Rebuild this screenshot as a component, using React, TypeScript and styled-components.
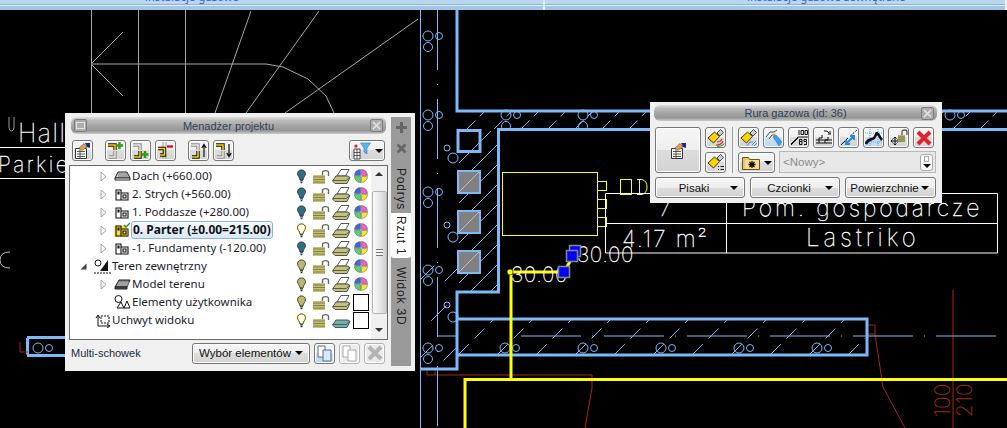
import styled, { createGlobalStyle } from "styled-components";
import type { ReactNode } from "react";

const GlobalStyle = createGlobalStyle`
    html, body {
        margin: 0;
        padding: 0;
        background: #000;
        overflow: hidden;
    }
`;

const WALL = "#7db9f6";
const RED = "#a22a0c";
const GREY = "#a8a8a8";

/* ---------- ikony ---------- */

const Stair = ({ d, on }: { d: string; on?: boolean }) => (
    <>
        <path d={d} fill="none" stroke={on ? "#111" : "#8a8a8a"} strokeWidth="3.4" />
        <path d={d} fill="none" stroke={on ? "#ffd400" : "#e8e8e8"} strokeWidth="1.5" />
    </>
);

const Plus = ({ x, y }: { x: number; y: number }) => (
    <path d={`M${x - 3.5} ${y}h7M${x} ${y - 3.5}v7`} stroke="#2f9a1c" strokeWidth="2.4" />
);

const LevelIcon = ({ kind }: { kind: "addUp" | "addDown" | "remove" | "up" | "down" }) => (
    <svg width="17" height="17" viewBox="0 0 17 17">
        {kind === "remove" ? (
            <>
                <path d="M6 0v17M9 0v4M9 12v5" stroke="#999" strokeWidth="1" fill="none" />
                <Stair d="M1 6.5H7.5V13H3" on />
                <path d="M10 4.5h6" stroke="#d8001a" strokeWidth="2.2" />
            </>
        ) : (
            <>
                <Stair d="M1 3H8V8" on={kind === "addUp" || kind === "down"} />
                <Stair d="M8 9V15H2" on={kind === "addDown" || kind === "up"} />
                {kind === "addUp" && <Plus x={12.5} y={3.5} />}
                {kind === "addDown" && <Plus x={13} y={12.5} />}
                {kind === "up" && <path d="M14 15V3M11.8 6 14 2.5 16.2 6" stroke="#111" strokeWidth="1.2" fill="none" />}
                {kind === "down" && <path d="M14 2v12M11.8 11 14 14.5 16.2 11" stroke="#111" strokeWidth="1.2" fill="none" />}
            </>
        )}
    </svg>
);

const NoteIcon = () => (
    <svg width="17" height="17" viewBox="0 0 17 17">
        <path d="M1.5 6.5h11v10h-11z" fill="#fff" stroke="#333" />
        <path d="M3 9.5h8M3 12h8M3 14.5h8M6 7v9" stroke="#444" strokeWidth=".9" />
        <path d="M5 6 10 1.5 13 5 8 8.5z" fill="#e89a52" stroke="#7a5a3a" strokeWidth=".6" />
        <path d="M11 1h5v5l-3-1z" fill="#1a2a88" />
    </svg>
);

const FilterIcon = () => (
    <svg width="20" height="18" viewBox="0 0 20 18">
        <path d="M2 7h6v10H2z" fill="#fff" stroke="#333" strokeWidth=".9" />
        <path d="M5 7v10M2 10.5h6M2 13.5h6" stroke="#333" strokeWidth=".8" />
        <circle cx="4" cy="4" r="1.6" fill="#e02020" />
        <path d="M8.500 1h10l-3.500 5v6l-3-2V6z" fill="#5ab4f0" stroke="#2d80c8" strokeWidth=".6" />
    </svg>
);

const Caret = styled.span`
    display: inline-block;
    width: 0;
    height: 0;
    border-left: 4px solid transparent;
    border-right: 4px solid transparent;
    border-top: 4px solid #000;
    flex: none;
`;

const BULB = { blue: "#2b6f86", olive: "#b9b96e", pale: "#fffbe0" };

const Bulb = ({ tone }: { tone: keyof typeof BULB }) => (
    <svg width="11" height="15" viewBox="0 0 12 17">
        {tone === "pale" && <circle cx="6" cy="6" r="6" fill="#ffff90" />}
        <path
            d="M6 1C3 1 1.5 3 1.5 5.5 1.5 8 4 9 4.3 12.5h3.4C8 9 10.500 8 10.500 5.500 10.500 3 9 1 6 1z"
            fill={BULB[tone]}
            stroke="#222"
            strokeWidth=".9"
        />
        <path d="M4.500 13.500h3M5 15.500h2" stroke={tone === "blue" ? "#1030c0" : "#222"} strokeWidth="1.400" />
    </svg>
);

const Lock = () => (
    <svg width="17" height="15" viewBox="0 0 17 15">
        <path d="M9.500 7V3.500C9.500 1 15.500 1 15.500 3.500V7" fill="none" stroke="#666" strokeWidth="1.400" />
        <path d="M0 6h12v9H0z" fill="#c4c27a" />
        <path d="M0 8h12M0 10.500h12M0 13h12" stroke="#6e6d34" strokeWidth=".8" />
    </svg>
);

const Printer = ({ tone = "#c4c27a" }: { tone?: string }) => (
    <svg width="19" height="15" viewBox="0 0 19 15">
        {tone === "#c4c27a" && <path d="M5 7 9 .5h8L13.500 7z" fill="#fff" stroke="#444" strokeWidth=".9" />}
        <path d="M4 7h12l2 1.500-3 6H3l-2.500-2.500z" fill={tone} stroke="#444" strokeWidth=".9" />
        <path d="M1 11.500h13.500l3-3.500" fill="none" stroke="#444" strokeWidth=".8" />
    </svg>
);

const Palette = () => (
    <svg width="14" height="14" viewBox="0 0 14 14">
        <path d="M6.500 6.500V.5A6 6 0 0 0 .5 6.500z" fill="#3f62ea" stroke="#333" strokeWidth=".4" />
        <path d="M7.500 6.500V.5A6 6 0 0 1 13.500 6.500z" fill="#f45cc8" stroke="#333" strokeWidth=".4" />
        <path d="M6.500 7.500H.5A6 6 0 0 0 6.500 13.500z" fill="#4ed86c" stroke="#333" strokeWidth=".4" />
        <path d="M7.500 7.500h6A6 6 0 0 1 7.500 13.500z" fill="#f8e62a" stroke="#333" strokeWidth=".4" />
    </svg>
);

const RoofIcon = () => (
    <svg width="17" height="12" viewBox="0 0 17 12">
        <path d="M1 8 4 2h9l3 6z" fill="#ccc" stroke="#222" />
        <path d="M5 3v4M7 3v4M9 3v4M11 3v4M13 3v4" stroke="#666" strokeWidth=".8" />
        <path d="M1 8h15v2H1z" fill="#fff" stroke="#222" />
    </svg>
);

const FloorIcon = ({ active }: { active?: boolean }) => (
    <svg width="17" height="16" viewBox="0 0 17 16">
        {active && <path d="M.5 3.500h12.500v11.500H.5z" fill="#ffd83a" />}
        <path d="M2 4h5v10H2zM7 7h7v7H7zM4 6h1v2H4zM9 9h3v3H9z" fill="none" stroke="#111" strokeWidth="1.100" />
        {active && <path d="M10 3l2 2 4-4" fill="none" stroke="#2f8a2a" strokeWidth="1.300" />}
    </svg>
);

const TerrainIcon = () => (
    <svg width="17" height="17" viewBox="0 0 17 17">
        <circle cx="4" cy="5" r="3" fill="#fff" stroke="#111" />
        <path d="M6 13 14 2v11z" fill="#111" />
        <path d="M0 15h17" stroke="#111" strokeDasharray="2 1" />
    </svg>
);

const ModelIcon = () => (
    <svg width="17" height="12" viewBox="0 0 17 12">
        <path d="M1 9 5 2h11l-3 7z" fill="#888" stroke="#222" />
        <path d="M3 7h11M4 5h11" stroke="#ccc" strokeWidth=".8" />
        <path d="M1 9h12v2H1z" fill="#555" stroke="#222" />
    </svg>
);

const ElementsIcon = () => (
    <svg width="17" height="14" viewBox="0 0 17 14">
        <circle cx="4.500" cy="4" r="3.500" fill="#fff" stroke="#111" />
        <path d="M3 13l7-0 -3-6zM10 13h6l-3-7-3 7z" fill="#fff" stroke="#111" />
    </svg>
);

const HandleIcon = () => (
    <svg width="17" height="15" viewBox="0 0 17 15">
        <path d="M4 13V3M2 5l2-3 2 3M4 13h12M13 11l3 2-3 2" fill="none" stroke="#111" />
        <path d="M7 3h8v7H7z" fill="none" stroke="#111" strokeDasharray="2 1" />
    </svg>
);

const Brush = ({ badge }: { badge: "hatch" | "colors" | "list" | "pipe" }) => (
    <svg width="18" height="18" viewBox="0 0 18 18">
        <path d="M10 4 13.500 .5l3 3L13 7z" fill="#ccd" stroke="#222" strokeWidth=".8" />
        <path d="M1 9 7.500 3l5 4.500L6.500 14z" fill="#ffd400" stroke="#222" strokeWidth=".9" />
        {badge === "colors" && <path d="M9 16c3 0 6-1 7-4M10 13c2 0 4-1 5-3" fill="none" stroke="#e03030" strokeWidth="1.200" />}
        {badge === "colors" && <path d="M10 17.500c3 0 6-1 7.500-3" fill="none" stroke="#30a040" strokeWidth="1.200" />}
        {badge === "list" && <path d="M11 12h1v1h-1zM13.500 12H17v1h-3.500zM11 15h1v1h-1zM13.500 15H17v1h-3.500z" fill="#222" />}
        {badge === "pipe" && <path d="M7 17l3-4h3M12 16l4-4M14 17l3-3" fill="none" stroke="#3a90e0" strokeWidth="1" />}
    </svg>
);

const PipeBrush = () => (
    <svg width="18" height="18" viewBox="0 0 18 18">
        <path d="M1 8l4-5h4l3-2M4 10l3-4h3" fill="none" stroke="#333" strokeWidth=".9" />
        <path d="M7 6l2-2 2 2-2 2z" fill="#f0a020" />
        <path d="M8 8l3-2 6 7-3 4z" fill="#3aa0f0" stroke="#1d70b8" strokeWidth=".5" />
    </svg>
);

const ScaleIcon = () => (
    <svg width="18" height="17" viewBox="0 0 18 17">
        <path d="M1 15 8 8h10" fill="none" stroke="#111" />
        <path d="M1 16 8 9" fill="none" stroke="#111" />
        <path
            d="M9 1v5M11 1.500h2.500v4H11zM15 1.500h2.500v4H15zM9.500 10.500h2.500v2H9.500zM9.500 12.500h2.500v3H9.500zM14 10.500h2.500v2H14zM16.500 12.500v3H14"
            fill="none"
            stroke="#111"
        />
    </svg>
);

const StepIcon = () => (
    <svg width="18" height="17" viewBox="0 0 18 17">
        <path d="M1 11h16M1 14h16M4 14V9h3V6M10 14v-3h3V8" fill="none" stroke="#111" />
        <path d="M9 2h3l2 2M15 2v3M13 5h3" fill="none" stroke="#111" />
    </svg>
);

const LineArrowIcon = () => (
    <svg width="18" height="17" viewBox="0 0 18 17">
        <path d="M1 16 8 9" stroke="#111" />
        <path d="M10 7l7-6" stroke="#111" strokeDasharray="2 1.500" />
        <path d="M6 15 14 7M6 11v4h4M14 11V7h-4" fill="none" stroke="#1f8ae0" strokeWidth="1.800" />
    </svg>
);

const RouteIcon = () => (
    <svg width="18" height="18" viewBox="0 0 18 18">
        <path d="M0 4h18M0 13h18M5 0v18M13 0v18" stroke="#5aa0f0" strokeDasharray="1 1" />
        <path d="M1 15c2-6 6-4 8-6s2-5 3-5 3 5 5 7" fill="none" stroke="#111" strokeWidth="2.600" />
    </svg>
);

const MoveLockIcon = () => (
    <svg width="18" height="18" viewBox="0 0 18 18">
        <path d="M1 12h8M5 8v8M1 12l1.500-1.500M1 12l1.500 1.500M9 12l-1.500-1.500M9 12l-1.500 1.500M5 8 3.500 9.500M5 8l1.500 1.500M5 16l-1.500-1.500M5 16l1.500-1.500" stroke="#111" fill="none" />
        <path d="M8 6h7v7H8z" fill="#b7b56a" />
        <path d="M8 8h7M8 10h7M8 12h7" stroke="#5b5a2a" strokeWidth=".7" />
        <path d="M12 6V2.500c0-2 5-2 5 0V6" fill="none" stroke="#555" strokeWidth="1.300" />
    </svg>
);

const DeleteIcon = ({ off }: { off?: boolean }) => (
    <svg width="18" height="18" viewBox="0 0 18 18">
        <path d="M3 3 15 15M15 3 3 15" stroke={off ? "#b4b4b4" : "#e0242c"} strokeWidth="4" />
    </svg>
);

const FolderIcon = () => (
    <svg width="18" height="15" viewBox="0 0 18 15">
        <path d="M.5 2.500h6l1 2h10v10H.5z" fill="#e8c468" stroke="#6a5520" />
        <path d="M3 5h14v9H3z" fill="#f4dc90" />
        <path d="M10 6v7M6.500 9.500h7M7.500 7l5 5M12.500 7l-5 5" stroke="#111" strokeWidth="1.300" />
    </svg>
);

const CopyIcon = ({ off }: { off?: boolean }) => (
    <svg width="17" height="17" viewBox="0 0 17 17">
        <path d="M2 1h7v11H2z" fill="#fff" stroke={off ? "#aaa" : "#5a6a88"} />
        <path d="M7 5h8v11H7z" fill={off ? "#fff" : "#d8e8fa"} stroke={off ? "#aaa" : "#5a6a88"} />
    </svg>
);

const ShowIcon = () => (
    <svg width="11" height="11" viewBox="0 0 11 11">
        <path d="M0 4h4V0h3v4h4v3H7v4H4V7H0z" fill="#666" />
    </svg>
);

const HideIcon = () => (
    <svg width="11" height="11" viewBox="0 0 11 11">
        <path d="M1.500 1.500 9.500 9.500M9.500 1.500 1.500 9.500" stroke="#666" strokeWidth="2.600" />
    </svg>
);

const CloseGlyph = () => (
    <svg width="9" height="9" viewBox="0 0 9 9">
        <path d="M1 1 8 8M8 1 1 8" stroke="#e4e4e4" strokeWidth="1.600" />
    </svg>
);

const TreeArrow = ({ kind }: { kind?: "open" | "closed" }) => (
    <ArrowSlot>
        {kind === "closed" && (
            <svg width="7" height="11" viewBox="0 0 7 11">
                <path d="M1 1 6 5.500 1 10z" fill="#fff" stroke="#a4a4a4" />
            </svg>
        )}
        {kind === "open" && (
            <svg width="7" height="7" viewBox="0 0 7 7">
                <path d="M6.500 .5V6.500H.5z" fill="#444" />
            </svg>
        )}
    </ArrowSlot>
);

/* ---------- rysunek CAD ---------- */

const range = (from: number, to: number, step: number) => {
    const out: number[] = [];
    for (let v = from; v <= to; v += step) out.push(v);
    return out;
};

const CadText = styled.text`
    font-family: "Inter", "Liberation Sans", sans-serif;
    font-weight: 100;
    fill: #fff;
    stroke: #fff;
    stroke-width: 0.35;
`;

const hatch = (clip: string, x0: number, x1: number, step: number, y0: number, y1: number, dash?: string) => (
    <g clipPath={`url(#${clip})`} stroke={WALL} strokeWidth="1" fill="none">
        {range(x0, x1, step).map((x) => (
            <line key={x} x1={x} y1={y1} x2={x + (y1 - y0)} y2={y0} strokeDasharray={dash} />
        ))}
    </g>
);

const Rings = ({ x, y, third = true }: { x: number; y: number; third?: boolean }) => (
    <g fill="none" stroke={WALL}>
        <circle cx={x} cy={y} r="5" />
        <circle cx={x + 11} cy={y} r="3.500" />
        {third && <circle cx={x} cy={y + 11} r="4.500" />}
    </g>
);

const Drawing = () => (
    <Canvas viewBox="0 10 1007 418">
        <defs>
            <clipPath id="topWall"><rect x="459" y="111" width="548" height="18" /></clipPath>
            <clipPath id="column"><rect x="459" y="131" width="38" height="160" /></clipPath>
            <clipPath id="leftBand"><rect x="421" y="10" width="36" height="358" /></clipPath>
            <clipPath id="bottomWall"><rect x="459" y="320" width="406" height="34" /></clipPath>
        </defs>

        {/* szare linie dachu */}
        <g fill="none" stroke={GREY} strokeWidth="1">
            <path d="M91.500 10V113M138.500 10V113M185.500 10V113" />
            <path d="M91 64H266L283 67 308 79 326 96 334 113" />
            <path d="M123 32 91 64 123 96" />
            <path d="M251 11 215 113M319 11 246 113M418 19 285 113" />
        </g>

        {/* lewa strona */}
        <g fill="none" stroke="#fff" strokeWidth="1">
            <path d="M0 147.500H65M0 178.500H65" />
            <path d="M9 117V127Q9 131 11.500 131T14 127V117" stroke="#999" />
        </g>
        <CadText x="18" y="142" fontSize="25" letterSpacing="1.500">Hall</CadText>
        <CadText x="-2" y="172" fontSize="21" letterSpacing="2.500">Parkie</CadText>
        <path d="M10 252Q0 252 0 260T10 268" fill="none" stroke="#bbb" />

        <g fill="none" stroke={WALL}>
            <path d="M27.500 338V354.500M27 337.500H66M27 355.500H66" strokeWidth="3" />
        </g>
        <Rings x={38} y={348} third={false} />
        <path d="M20 342V352H28" fill="none" stroke={RED} />

        {/* czerwone linie */}
        <g fill="none" stroke={RED} strokeWidth="1">
            <path d="M427 368V375H592V388L585 428" />
            <path d="M435 368V375" />
            <path d="M867 325H875V334H867M875 334 883 387 905 428" />
            <path d="M953 290V428" />
        </g>
        <g fill={RED} fontFamily="'Inter', 'Liberation Sans', sans-serif" fontWeight="200" fontSize="21">
            <text transform="translate(950 417) rotate(-90)">100</text>
            <text transform="translate(972 417) rotate(-90)">210</text>
        </g>

        {/* cienkie linie osiowe */}
        <g fill="none" stroke={WALL} strokeWidth="1">
            <path d="M420.500 10V428" />
            <path d="M437.500 10V428" strokeDasharray="60 14 1 14" />
            <path d="M438 336H457M521 336H1007" strokeDasharray="60 11 1 11" />
        </g>

        {hatch("leftBand", 300, 470, 26, 10, 400, "22 34")}
        {hatch("topWall", 440, 1000, 27, 111, 129, "12 6")}
        {hatch("column", 330, 500, 20, 130, 292)}
        {hatch("bottomWall", 420, 870, 39, 320, 354, "14 8")}

        {[36, 115, 192, 270, 348].map((y) => (
            <Rings key={y} x={428} y={y} />
        ))}
        <g fill="none" stroke={WALL}>
            <circle cx="447" cy="148" r="3" />
            <circle cx="453" cy="158" r="5" />
            <circle cx="447" cy="225" r="3" />
            <circle cx="453" cy="237" r="5" />
            <circle cx="447" cy="305" r="3" />
            <circle cx="453" cy="317" r="5" />
        </g>
        {[506, 583].map((x) => (
            <Rings key={x} x={x} y={115} />
        ))}
        <Rings x={950} y={115} third={false} />
        {[505, 583, 661, 739, 817].map((x) => (
            <Rings key={x} x={x} y={348} third={false} />
        ))}

        {/* grube sciany */}
        <g fill="none" stroke={WALL} strokeWidth="3">
            <path d="M457 10V111H1007" />
            <path d="M1007 129.500H498.500V292H457V369H420" />
            <path d="M457 319H867V355H457" />
            <rect x="458" y="130.500" width="22" height="21" />
        </g>
        {[171, 211, 251].map((y) => (
            <g key={y}>
                <rect x="458" y={y} width="22" height="22" fill="#808080" stroke={WALL} strokeWidth="2" />
                <path d={`M459 ${y + 21}L479 ${y + 1}`} stroke="#c0c0c0" />
            </g>
        ))}

        {/* urzadzenie */}
        <g fill="none" stroke="#ffff00" strokeWidth="1">
            <rect x="502.500" y="172.500" width="95" height="63" />
            <rect x="597.500" y="181.500" width="9" height="9" />
            <rect x="597.500" y="199.500" width="9" height="9" />
            <rect x="597.500" y="217.500" width="9" height="9" />
            <rect x="620.500" y="179.500" width="11" height="15" />
            <path d="M637 179.500H642Q647 181 647 187T642 194.500H637M639.500 180V194" />
        </g>

        {/* tabela */}
        <g fill="none" stroke="#fff" strokeWidth="1">
            <path d="M605.500 253V193.500H997.500V253H605.500M605.500 223.500H997.500M726.500 193.500V253" />
        </g>
        <CadText x="659" y="216" fontSize="24">7</CadText>
        <CadText x="742" y="216" fontSize="23" letterSpacing="2.900">Pom. gospodarcze</CadText>
        <CadText x="622" y="247" fontSize="23" letterSpacing="1.800">4.17 m²</CadText>
        <CadText x="806" y="246" fontSize="24" letterSpacing="4">Lastriko</CadText>

        {/* rura */}
        <g fill="none" stroke="#ffff00" strokeWidth="3">
            <path d="M511 379V272H564L572 258" />
            <path d="M465 428V379.500H1007" />
        </g>
        <circle cx="510" cy="272" r="3" fill="#ffff00" stroke="#000" strokeWidth=".6" />
        <CadText x="577" y="262" fontSize="21" letterSpacing=".6">30.00</CadText>
        <CadText x="511" y="282" fontSize="21" letterSpacing=".6">30.00</CadText>
        <Handle x="569.500" y="245.500" width="11" height="11" />
        <Handle x="566.500" y="250.500" width="11" height="11" />
        <Handle x="558.500" y="266.500" width="11" height="11" />
    </Canvas>
);

/* ---------- menedzer projektu ---------- */

type Row = {
    label: string;
    indent: number;
    caret?: "open" | "closed";
    icon: ReactNode;
    bulb: keyof typeof BULB;
    printTone?: string;
    palette?: boolean;
    active?: boolean;
};

const rows: Row[] = [
    { label: "Dach (+660.00)", indent: 30, caret: "closed", icon: <RoofIcon />, bulb: "blue", palette: true },
    { label: "2. Strych (+560.00)", indent: 30, caret: "closed", icon: <FloorIcon />, bulb: "blue", palette: true },
    { label: "1. Poddasze (+280.00)", indent: 30, caret: "closed", icon: <FloorIcon />, bulb: "blue", palette: true },
    { label: "0. Parter (±0.00=215.00)", indent: 30, caret: "closed", icon: <FloorIcon active />, bulb: "pale", palette: true, active: true },
    { label: "-1. Fundamenty (-120.00)", indent: 30, caret: "closed", icon: <FloorIcon />, bulb: "blue", palette: true },
    { label: "Teren zewnętrzny", indent: 10, caret: "open", icon: <TerrainIcon />, bulb: "olive", palette: true },
    { label: "Model terenu", indent: 30, caret: "closed", icon: <ModelIcon />, bulb: "olive", palette: true },
    { label: "Elementy użytkownika", indent: 30, icon: <ElementsIcon />, bulb: "olive" },
    { label: "Uchwyt widoku", indent: 10, icon: <HandleIcon />, bulb: "pale", printTone: "#6fb0b0" },
];

const ManagerWindow = () => (
    <ManagerFrame>
        <ManagerMain>
            <TitleBar>
                <TitleButton><TitleDash /></TitleButton>
                <TitleText>Menadżer projektu</TitleText>
                <TitleButton><CloseGlyph /></TitleButton>
            </TitleBar>

            <ManagerToolbar>
                <IconButton><NoteIcon /></IconButton>
                <ToolGroup>
                    <IconButton><LevelIcon kind="addUp" /></IconButton>
                    <IconButton><LevelIcon kind="addDown" /></IconButton>
                    <IconButton><LevelIcon kind="remove" /></IconButton>
                </ToolGroup>
                <ToolGroup>
                    <IconButton><LevelIcon kind="up" /></IconButton>
                    <IconButton><LevelIcon kind="down" /></IconButton>
                </ToolGroup>
                <FilterButton><FilterIcon /><Caret /></FilterButton>
            </ManagerToolbar>

            <TreePanel>
                <TreeList>
                    {rows.map((row) => (
                        <TreeRow key={row.label} $indent={row.indent}>
                            <TreeArrow kind={row.caret} />
                            <RowIcon>{row.icon}</RowIcon>
                            <RowLabel $active={row.active}>{row.label}</RowLabel>
                            <StatusCell $first><Bulb tone={row.bulb} /></StatusCell>
                            <StatusCell><Lock /></StatusCell>
                            <StatusCell><Printer tone={row.printTone} /></StatusCell>
                            <StatusCell>{row.palette ? <Palette /> : <EmptySwatch />}</StatusCell>
                        </TreeRow>
                    ))}
                </TreeList>
                <ScrollBar>
                    <ScrollArrow $up />
                    <ScrollThumb><ThumbGrip /></ScrollThumb>
                    <ScrollArrow />
                </ScrollBar>
            </TreePanel>

            <ManagerFooter>
                <FooterLabel>Multi-schowek</FooterLabel>
                <DropButton $width={118}><DropLabel>Wybór elementów</DropLabel><Caret /></DropButton>
                <IconButton $blue><CopyIcon /></IconButton>
                <IconButton $off><CopyIcon off /></IconButton>
                <IconButton $off><DeleteIcon off /></IconButton>
            </ManagerFooter>
        </ManagerMain>

        <TabColumn>
            <TabGlyph><ShowIcon /></TabGlyph>
            <TabGlyph><HideIcon /></TabGlyph>
            <SideTab $height={54}>Podrys</SideTab>
            <SideTab $height={45} $active>Rzut 1</SideTab>
            <SideTab $height={108}>Widok 3D</SideTab>
        </TabColumn>
    </ManagerFrame>
);

/* ---------- rura gazowa ---------- */

const PipeWindow = () => (
    <PipeFrame>
        <TitleBar $slim>
            <TitleSpacer />
            <TitleText>Rura gazowa (id: 36)</TitleText>
            <TitleButton><CloseGlyph /></TitleButton>
        </TitleBar>

        <PipeBody>
            <BigButton><NoteIcon /></BigButton>
            <BrushColumn>
                <IconButton><Brush badge="colors" /></IconButton>
                <IconButton><Brush badge="list" /></IconButton>
            </BrushColumn>
            <Divider />
            <PipeTools>
                <PipeToolRow>
                    <IconButton><Brush badge="pipe" /></IconButton>
                    <IconButton $blue><PipeBrush /></IconButton>
                    <IconButton><ScaleIcon /></IconButton>
                    <IconButton><StepIcon /></IconButton>
                    <IconButton><LineArrowIcon /></IconButton>
                    <IconButton $blue><RouteIcon /></IconButton>
                    <IconButton><MoveLockIcon /></IconButton>
                    <IconButton><DeleteIcon /></IconButton>
                </PipeToolRow>
                <LayerRow>
                    <FolderButton><FolderIcon /><Caret /></FolderButton>
                    <NameField>
                        <NamePlaceholder>&lt;Nowy&gt;</NamePlaceholder>
                        <NameSpin><SpinTop /><Caret /></NameSpin>
                    </NameField>
                </LayerRow>
            </PipeTools>
        </PipeBody>

        <PipeFooter>
            <DropButton $width={90}><DropLabel>Pisaki</DropLabel><Caret /></DropButton>
            <DropButton $width={90}><DropLabel>Czcionki</DropLabel><Caret /></DropButton>
            <DropButton $width={91}><DropLabel>Powierzchnie</DropLabel><Caret /></DropButton>
        </PipeFooter>
    </PipeFrame>
);

const App = () => (
    <Page>
        <GlobalStyle />
        <TopBar>
            <TopTab $pad={145}><span>instalacje gazowe</span></TopTab>
            <TopTab $pad={202} $grow><span>instalacje gazowe zewnętrzne</span></TopTab>
        </TopBar>
        <Drawing />
        <ManagerWindow />
        <PipeWindow />
    </Page>
);

export default App;

const UI_FONT = `"Noto Sans", "DejaVu Sans", sans-serif`;
const LABEL_FONT = `"Liberation Sans", Arial, sans-serif`;

const Page = styled.div`
    position: relative;
    width: 1007px;
    height: 428px;
    overflow: hidden;
    background: #000;
    display: flex;
    flex-direction: column;
    font-family: ${UI_FONT};
`;

const TopBar = styled.div`
    height: 10px;
    flex: none;
    display: flex;
    background: linear-gradient(#bcd6f2 0, #bcd6f2 4px, #8fb2d8 4px, #8fb2d8 5px, #d6f4fa 5px, #d6f4fa 6px, #a4c6e6 6px, #a4c6e6 10px);
`;

const TopTab = styled.div<{ $pad: number; $grow?: boolean }>`
    width: ${({ $grow }) => ($grow ? "auto" : "545px")};
    flex: ${({ $grow }) => ($grow ? 1 : "none")};
    box-sizing: border-box;
    padding-left: ${({ $pad }) => $pad}px;
    overflow: hidden;
    border-right: 2px solid #e8f2fb;
    font-size: 11px;
    line-height: 0;
    color: #3e62c0;
    letter-spacing: 0.2px;
    white-space: nowrap;

    span {
        display: block;
        margin-top: -3px;
    }
`;

const Canvas = styled.svg`
    flex: 1;
    display: block;
    width: 1007px;
    height: 418px;
`;

const Handle = styled.rect`
    fill: #0000ff;
    stroke: #888;
    stroke-width: 1.5;
`;

const Floating = styled.div`
    position: absolute;
    box-sizing: border-box;
    background: #f0f0f0;
    color: #111;
`;

const ManagerFrame = styled(Floating)`
    left: 65px;
    top: 113px;
    width: 350px;
    height: 258px;
    display: flex;
    padding: 4px 4px 5px 4px;
    gap: 3px;
`;

const ManagerMain = styled.div`
    width: 319px;
    display: flex;
    flex-direction: column;
`;

const TitleBar = styled.div<{ $slim?: boolean }>`
    height: ${({ $slim }) => ($slim ? 16 : 17)}px;
    flex: none;
    margin: 0 ${({ $slim }) => ($slim ? 0 : 2)}px;
    padding: 0 3px;
    display: flex;
    align-items: center;
    justify-content: space-between;
    border-radius: 6px;
    background: linear-gradient(#e0e0e0 0, #bcbcbc 20%, #a6a6a6 50%, #969696 80%, #cccccc 100%);
`;

const TitleText = styled.div`
    font-family: ${LABEL_FONT};
    font-size: 11px;
    color: #33425a;
    line-height: 16px;
`;

const TitleButton = styled.div`
    width: 11px;
    height: 11px;
    border: 1px solid #7c7c7c;
    border-radius: 2px;
    background: #adadad;
    display: flex;
    align-items: center;
    justify-content: center;
`;

const TitleSpacer = styled.div`
    width: 13px;
`;

const TitleDash = styled.div`
    width: 7px;
    height: 5px;
    border: 1px solid #e4e4e4;
`;

const ManagerToolbar = styled.div`
    height: 31px;
    flex: none;
    padding: 6px 3px 0 3px;
    box-sizing: border-box;
    display: flex;
    align-items: flex-start;
    gap: 12px;
`;

const ToolGroup = styled.div`
    display: flex;
    gap: 4px;
`;

const IconButton = styled.div<{ $blue?: boolean; $off?: boolean }>`
    width: 21px;
    height: 21px;
    flex: none;
    box-sizing: border-box;
    display: flex;
    align-items: center;
    justify-content: center;
    border: 1px solid ${({ $off }) => ($off ? "#b4b4b4" : "#777")};
    border-radius: 3px;
    box-shadow: inset 0 0 0 1px #fff;
    background: ${({ $blue, $off }) =>
        $blue
            ? "linear-gradient(#eef5fd 0, #eef5fd 50%, #cfe2f6 50%, #bcd6f0 100%)"
            : $off
              ? "#ececec"
              : "linear-gradient(#f6f6f6 0, #eeeeee 50%, #dcdcdc 50%, #d4d4d4 100%)"};
`;

const FilterButton = styled(IconButton)`
    width: 36px;
    margin-left: auto;
    gap: 3px;
`;

const TreePanel = styled.div`
    height: 175px;
    flex: none;
    display: flex;
    box-sizing: border-box;
    border: 1px solid #6a6a6a;
    background: #fff;
`;

const TreeList = styled.div`
    flex: 1;
    min-width: 0;
    display: flex;
    flex-direction: column;
    padding-top: 1px;
`;

const TreeRow = styled.div<{ $indent: number }>`
    height: 18px;
    flex: none;
    display: flex;
    align-items: center;
    padding-left: ${({ $indent }) => $indent}px;
`;

const ArrowSlot = styled.span`
    width: 14px;
    flex: none;
    display: flex;
    align-items: center;
`;

const RowIcon = styled.span`
    width: 18px;
    flex: none;
    display: flex;
    align-items: center;
`;

const RowLabel = styled.span<{ $active?: boolean }>`
    font-size: ${({ $active }) => ($active ? 12 : 11.5)}px;
    line-height: 16px;
    color: #1c1c30;
    white-space: nowrap;
    margin-left: ${({ $active }) => ($active ? "-1px" : 0)};
    padding: 0 ${({ $active }) => ($active ? "1px" : 0)};
    font-weight: ${({ $active }) => ($active ? 700 : 400)};
    ${({ $active }) =>
        $active
            ? `
        border: 1px solid #8db4dc;
        border-radius: 3px;
        background: linear-gradient(#f4f9fe, #d8e8f8);
        color: #111;
    `
            : ""}
`;

const StatusCell = styled.span<{ $first?: boolean }>`
    width: 20px;
    flex: none;
    display: flex;
    align-items: center;
    justify-content: center;
    ${({ $first }) => ($first ? "margin-left: auto;" : "")}
`;

const EmptySwatch = styled.span`
    width: 14px;
    height: 15px;
    border: 1px solid #000;
    background: #fff;
`;

const ScrollBar = styled.div`
    width: 16px;
    flex: none;
    display: flex;
    flex-direction: column;
    align-items: center;
    justify-content: space-between;
    padding: 6px 0 7px 0;
    box-sizing: border-box;
    background: #f0f0f0;
`;

const ScrollArrow = styled.span<{ $up?: boolean }>`
    width: 0;
    height: 0;
    border-left: 4px solid transparent;
    border-right: 4px solid transparent;
    ${({ $up }) => ($up ? "border-bottom: 4px solid #333;" : "border-top: 4px solid #333;")}
`;

const ScrollThumb = styled.div`
    width: 15px;
    height: 123px;
    box-sizing: border-box;
    border: 1px solid #b4b4b4;
    border-radius: 2px;
    background: linear-gradient(90deg, #fafafa, #e4e4e4 60%, #d0d0d0);
    display: flex;
    align-items: center;
    justify-content: center;
`;

const ThumbGrip = styled.div`
    width: 7px;
    height: 7px;
    background: repeating-linear-gradient(#777 0, #777 1px, #f4f4f4 1px, #f4f4f4 3px);
`;

const ManagerFooter = styled.div`
    flex: 1;
    display: flex;
    align-items: center;
    padding: 0 3px 0 2px;
    gap: 4px;
`;

const FooterLabel = styled.span`
    font-family: ${LABEL_FONT};
    font-size: 11px;
    color: #1c2a44;
    margin-right: auto;
`;

const DropButton = styled.div<{ $width: number }>`
    width: ${({ $width }) => $width}px;
    height: 21px;
    flex: none;
    box-sizing: border-box;
    padding: 0 6px 0 2px;
    display: flex;
    align-items: center;
    font-family: ${LABEL_FONT};
    font-size: 11.5px;
    color: #111;
    border: 1px solid #777;
    border-radius: 3px;
    box-shadow: inset 0 0 0 1px #fff;
    background: linear-gradient(#f6f6f6 0, #eeeeee 50%, #dcdcdc 50%, #d4d4d4 100%);
`;

const DropLabel = styled.span`
    flex: 1;
    min-width: 0;
    text-align: center;
    white-space: nowrap;
`;

const TabColumn = styled.div`
    width: 20px;
    flex: none;
    display: flex;
    flex-direction: column;
    background: #9a9a9a;
`;

const TabGlyph = styled.div`
    height: 21px;
    flex: none;
    display: flex;
    align-items: center;
    justify-content: center;
`;

const SideTab = styled.div<{ $height: number; $active?: boolean }>`
    height: ${({ $height }) => $height}px;
    flex: none;
    box-sizing: border-box;
    writing-mode: vertical-rl;
    padding-top: ${({ $active }) => ($active ? 3 : 9)}px;
    display: flex;
    align-items: center;
    font-family: ${LABEL_FONT};
    font-size: 12px;
    color: #222;
    background: ${({ $active }) => ($active ? "#fff" : "#9a9a9a")};
    border-radius: 0 0 ${({ $active }) => ($active ? "3px 3px" : "0 0")};
    letter-spacing: 0.8px;
`;

const PipeFrame = styled(Floating)`
    left: 650px;
    top: 102px;
    width: 292px;
    height: 101px;
    padding: 3px 5px 0 4px;
    display: flex;
    flex-direction: column;
`;

const PipeBody = styled.div`
    display: flex;
    margin-top: 6px;
    padding-left: 1px;
`;

const BigButton = styled(IconButton)`
    width: 46px;
    height: 46px;
    margin-right: 4px;
`;

const BrushColumn = styled.div`
    display: flex;
    flex-direction: column;
    gap: 4px;
`;

const Divider = styled.div`
    width: 1px;
    height: 46px;
    margin: 0 5px 0 6px;
    background: #a0a0a0;
`;

const PipeTools = styled.div`
    flex: 1;
    min-width: 0;
    display: flex;
    flex-direction: column;
    gap: 4px;
`;

const PipeToolRow = styled.div`
    display: flex;
    gap: 4px;
`;

const LayerRow = styled.div`
    display: flex;
    gap: 4px;
`;

const FolderButton = styled(IconButton)`
    width: 37px;
    gap: 4px;
`;

const NameField = styled.div`
    width: 157px;
    height: 22px;
    margin-top: -1px;
    box-sizing: border-box;
    border: 1px solid #b8b8b8;
    background: #e8e8e8;
    display: flex;
    align-items: center;
    justify-content: space-between;
    padding: 0 2px 0 3px;
`;

const NamePlaceholder = styled.span`
    font-family: ${LABEL_FONT};
    font-size: 11.5px;
    color: #8a8a8a;
`;

const NameSpin = styled.div`
    width: 13px;
    height: 17px;
    box-sizing: border-box;
    border: 1px solid #aaa;
    border-radius: 3px;
    background: #f8f8f8;
    display: flex;
    flex-direction: column;
    align-items: center;
    gap: 2px;
    padding-top: 1px;
`;

const SpinTop = styled.span`
    width: 5px;
    height: 6px;
    border: 1px solid #aaa;
    box-sizing: border-box;
    background: #fff;
`;

const PipeFooter = styled.div`
    display: flex;
    gap: 5px;
    margin-top: 4px;
    padding-left: 1px;
`;
